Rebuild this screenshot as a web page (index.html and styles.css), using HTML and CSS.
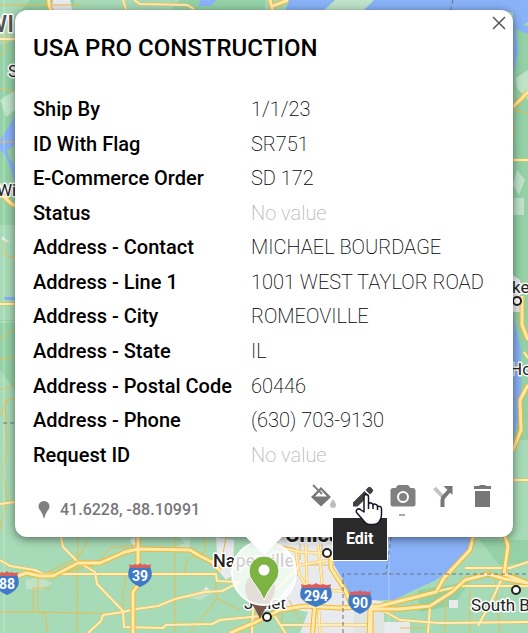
FILE: index.html
```html
<!DOCTYPE html>
<html lang="en">
<head>
  <meta charset="UTF-8" />
  <meta name="viewport" content="width=device-width, initial-scale=1" />
  <title>USA PRO CONSTRUCTION</title>
  <link rel="stylesheet" href="styles.css">
</head>
<body>

  <svg class="map" viewBox="0 0 528 633" preserveAspectRatio="xMidYMin slice" role="img" aria-label="Map">
    <defs>
      <g id="highways">
        <path d="M18 576L26 573L40 576H53L78 563H100L125 552L138 549L190 550L200 556L212 562L220 571" />
        <path d="M138 530V585L133 592V640" />
        <path d="M0 192Q8 202 15 206" />
        <path d="M49 0Q48 6 52 12M270 0L273 12M273 6L288 0" />
        <path d="M473 537L470 550L444 578L436 592L412 598L380 606L340 608L305 606L280 610L256 622L230 633" />
        <path d="M528 583L505 579L488 574L465 580L452 592L430 606L400 609H370L369 640" />
        <path d="M503 530L508 546L504 574L528 583" />
        <path d="M331 555V568L345 590L352 606M315 602L312 640" />
        <path d="M371 604V640" />
        <path d="M513 107L528 92M522 296V325L528 340M528 385L520 400L521 430L513 450" />
      </g>
      <g id="roads">
        <path d="M0 560L10 566L35 570L45 575M0 504L15 502M0 304H15" />
        <path d="M61 537L63 547L78 562L95 572L97 584L123 611L124 627L163 628L166 625L212 624L220 620L260 616" />
        <path d="M45 574H216L217 581L240 582" />
        <path d="M88 633L101 621L103 615L123 612L136 609L158 606L175 599L205 592L222 591L240 582" />
        <path d="M272 545L300 552L332 554M276 590L300 565L330 560M296 552L299 574L315 602" />
        <path d="M252 633L253 610L260 598M272 612L290 640M306 545L307 590L345 591" />
        <path d="M430 606L428 633M465 568H510L528 562M435 592L460 586H528" />
        <path d="M375 606L400 620L440 623L528 622M504 574L492 600L478 626" />
        <path d="M0 39H15M123 0L126 9M134 0L140 4L187 5L194 9M513 160H528M524 352L528 358M513 480H528" />
        <path d="M318 545L322 580L318 600L320 633M280 625H370" />
      </g>
    </defs>

    <rect width="528" height="633" fill="#a7dab6" />

    <!-- darker forest and farmland -->
    <path d="M0 45L15 40V225H0ZM0 320H15V390L0 370ZM30 0L75 0L70 12H20ZM180 0H265V12H170Z" fill="#94d1a6" />
    <path d="M505 25H528V440H505ZM480 540H528V562L500 566ZM418 590L470 582L452 606L420 612Z" fill="#94d1a6" />
    <path d="M26 580L40 577L52 583L42 590L26 589ZM174 548L184 543L180 537H190V552ZM186 597L206 588L216 591L200 600ZM0 100L15 90V110L6 117ZM517 170L525 180L519 195L513 185ZM516 78L528 70V100L517 88ZM514 198H524V215H513Z" fill="#bfe3c9" />

    <!-- towns -->
    <path d="M53 0H70Q73 8 71 12H50ZM216 537L234 540L233 575L226 580L218 570ZM130 540L135 537L136 550ZM204 590L206 586L210 591ZM275 537H334L345 595L384 602V633H300L308 612L272 605L298 575ZM384 622H410V633H384ZM449 600H458V608H449ZM513 275L520 280V312H513ZM2 236L10 243L2 240Z" fill="#e8eaed" />
    <path d="M354 608H384V633H354Z" fill="#dfe5e3" />

    <!-- water -->
    <path d="M289 0H528V22L516 30L518 50L513 78V12H285Z" fill="#89b2f8" />
    <path d="M200 0H217L210 6H199Z" fill="#89b2f8" />
    <path d="M335 0H374L362 12H322Z" fill="#bfe3c9" />
    <path d="M518 26H528V34L518 30ZM513 315L521 350V410L513 440Z" fill="#89b2f8" />
    <path d="M15 115L8 128L0 140V150L6 156L11 170L15 182V165L9 158L7 150L15 145ZM4 297H15V300H4Z" fill="#89b2f8" />
    <path d="M332 530H474L470 546L455 566L436 580L412 591L394 600L372 600L352 598L343 580L334 565Z" fill="#89b2f8" />

    <!-- county and local roads -->
    <path class="lane" d="M47 640L46 614L38 611V573M78 530L77 633M33 612V588H50M0 612H35L123 614M175 530V640M216 581V600L190 633M87 540L80 556L48 572M125 575V588H123V612M138 545L110 548L95 565L47 576M0 5H80M5 13V50L0 56M0 88L15 92M0 142H15M4 240V255L15 258M0 340Q6 332 15 330M0 360L15 356M0 390L15 385M0 415L8 400L15 398M5 398L7 450L3 470L7 500L0 530M513 110L528 113M513 123V140M270 543L296 549M281 565H330M300 537V560M322 537V552M265 537V550M450 568V574M495 575L500 633M445 600V633M400 628H430M470 590V633M205 537V552L190 558M216 598L240 610M187 559L184 574M226 537L222 560L236 573M282 612V633M289 600L300 620" />
    <path d="M389 10V633M4 0V633M0 322H15" stroke="#ffffff" stroke-opacity=".35" />

    <use href="#roads" class="road-case" />
    <use href="#roads" class="road-fill" />
    <use href="#highways" class="hwy-case" />
    <use href="#highways" class="hwy-fill" />
    <path class="border" d="M391 537L386 574M343 640V574H528M3 423H15M453 0L450 12" />

    <!-- interstate shields -->
    <g class="shield">
      <g transform="translate(7 583)">
        <path d="M-10 -9Q-13 -1 -11 3Q-8 9 0 12Q8 9 11 3Q13 -1 10 -9Z" fill="#3f7ac9" />
        <path d="M-11 -11Q-8 -9 -5 -11Q-2 -9 0 -12Q2 -9 5 -11Q8 -9 11 -11L10 -7H-10Z" fill="#d95f5f" />
        <text y="6">88</text>
      </g>
      <g transform="translate(140 575)">
        <path d="M-10 -9Q-13 -1 -11 3Q-8 9 0 12Q8 9 11 3Q13 -1 10 -9Z" fill="#3f7ac9" />
        <path d="M-11 -11Q-8 -9 -5 -11Q-2 -9 0 -12Q2 -9 5 -11Q8 -9 11 -11L10 -7H-10Z" fill="#d95f5f" />
        <text y="6">39</text>
      </g>
      <g transform="translate(316 595)">
        <path d="M-14 -9Q-17 -1 -15 3Q-10 9 0 12Q10 9 15 3Q17 -1 14 -9Z" fill="#3f7ac9" />
        <path d="M-15 -11Q-11 -9 -7 -11Q-3 -9 0 -12Q3 -9 7 -11Q11 -9 15 -11L14 -7H-14Z" fill="#d95f5f" />
        <text y="6">294</text>
      </g>
      <g transform="translate(360 602)">
        <path d="M-10 -9Q-13 -1 -11 3Q-8 9 0 12Q8 9 11 3Q13 -1 10 -9Z" fill="#3f7ac9" />
        <path d="M-11 -11Q-8 -9 -5 -11Q-2 -9 0 -12Q2 -9 5 -11Q8 -9 11 -11L10 -7H-10Z" fill="#d95f5f" />
        <text y="6">90</text>
      </g>
    </g>

    <!-- city labels -->
    <g class="city">
      <text class="state" x="-14" y="32">WI</text>
      <text x="8" y="77">S</text>
      <text x="-3" y="196">Wi</text>
      <text x="512" y="293">ke</text>
      <text x="510" y="375">Ho</text>
      <text class="big" x="285" y="542">Chicago</text>
      <text class="strong" x="213" y="567">Naperville</text>
      <text x="244" y="609">Joliet</text>
      <text x="471" y="611">South Bend</text>
    </g>
    <g fill="#ffffff" stroke="#222222" stroke-width="2">
      <circle cx="327" cy="553" r="4" />
      <circle cx="516" cy="590" r="4" />
      <circle cx="267" cy="617" r="4" />
      <circle cx="517" cy="301" r="4" />
    </g>

    <!-- markers -->
    <path d="M260 619Q256 609 248 599Q245 594 245 588A15 15 0 0 1 275 588Q275 594 272 599Q264 609 260 619Z" fill="#795548" />
    <circle cx="264" cy="573" r="32" fill="#ffffff" fill-opacity=".8" stroke="#ffffff" stroke-width="2" />
    <path d="M264 600Q260 590 253 582Q249 577 249 571A15 15 0 0 1 279 571Q279 577 275 582Q268 590 264 600Z" fill="#7cb342" stroke="#ffffff" />
    <circle cx="264" cy="570" r="5.5" fill="#ffffff" />
  </svg>

  <main class="card">
    <button type="button" class="close" aria-label="Close">
      <svg width="14" height="14" viewBox="0 0 14 14"><path d="M1 1L13 13M13 1L1 13" stroke="#555555" stroke-width="1.5" /></svg>
    </button>

    <h1>USA PRO CONSTRUCTION</h1>

    <table class="fields">
      <tr><th scope="row">Ship By</th><td>1/1/23</td></tr>
      <tr><th scope="row">ID With Flag</th><td>SR751</td></tr>
      <tr><th scope="row">E-Commerce Order</th><td>SD 172</td></tr>
      <tr><th scope="row">Status</th><td class="empty">No value</td></tr>
      <tr><th scope="row">Address - Contact</th><td>MICHAEL BOURDAGE</td></tr>
      <tr><th scope="row">Address - Line 1</th><td>1001 WEST TAYLOR ROAD</td></tr>
      <tr><th scope="row">Address - City</th><td>ROMEOVILLE</td></tr>
      <tr><th scope="row">Address - State</th><td>IL</td></tr>
      <tr><th scope="row">Address - Postal Code</th><td>60446</td></tr>
      <tr><th scope="row">Address - Phone</th><td>(630) 703-9130</td></tr>
      <tr><th scope="row">Request ID</th><td class="empty">No value</td></tr>
    </table>

    <footer class="card-footer">
      <div class="coords">
        <svg width="12" height="18" viewBox="0 0 12 18"><path d="M6 18Q5 13 2 9Q0.500 7.500 0.500 5.500A5.500 5.500 0 0 1 11.500 5.500Q11.500 7.500 10 9Q7 13 6 18Z" fill="#808080" /></svg>
        <span>41.6228, -88.10991</span>
      </div>

      <div class="actions">
        <button type="button" aria-label="Fill color">
          <svg viewBox="0 0 24 24">
            <path fill-rule="evenodd" d="M10 3L20 13L10 22.500L0 13ZM10 6L4 12.500H16Z" fill="#777777" />
            <path d="M2 1L11 10" stroke="#808080" stroke-width="2" />
            <path d="M22 15Q25 19 25 21A3 3 0 0 1 19 21Q19 19 22 15Z" fill="#bdbdbd" />
          </svg>
        </button>
        <div class="tip-anchor">
          <button type="button" aria-label="Edit" aria-describedby="tip">
            <svg viewBox="0 0 24 24">
              <path d="M2 18.500L13.500 7L18 11.500L6.500 22.500H2ZM14.500 6L17 3.500Q18.500 2 20 3.500L21.500 5Q23 6.500 21.500 8L19 10.500Z" fill="#404040" />
            </svg>
          </button>
          <div class="tip" id="tip" role="tooltip">Edit</div>
          <svg class="pointer" width="28" height="33" viewBox="0 0 28 33" aria-hidden="true">
            <path d="M9 19V4Q9 1.500 11 1.500Q13.500 1.500 13.500 4V11Q14 9.500 16 10Q18 10.500 18 12Q19 10.500 21 11.500Q22.500 12 22.500 13.500Q26.500 12.500 26.500 16V22Q26.500 26 24 29Q22 31.500 18 31.500H15Q11 31.500 8 27L2 20Q0.500 18 2 16.500Q4 15 6 17Z" fill="#ffffff" stroke="#17172b" stroke-width="1.500" stroke-linejoin="round" />
            <path d="M13.500 11V16M18 12V16M22.500 13.500V17" stroke="#17172b" stroke-width="1.500" />
          </svg>
        </div>
        <button type="button" aria-label="Photo">
          <svg viewBox="0 0 24 24">
            <path fill-rule="evenodd" d="M7 1H17L19.500 4H22Q24.500 4 24.500 6.500V20Q24.500 22.500 22 22.500H2Q-0.500 22.500 -0.500 20V6.500Q-0.500 4 2 4H4.500ZM12 7A6 6 0 0 0 12 19A6 6 0 0 0 12 7Z" fill="#808080" />
            <circle cx="12" cy="13" r="4" fill="#808080" />
            <path d="M8 31H14" stroke="#aaaaaa" stroke-width="2" />
          </svg>
        </button>
        <button type="button" aria-label="Directions">
          <svg viewBox="0 0 24 24">
            <path d="M3.500 4L12 13" stroke="#c4c4c4" stroke-width="4" />
            <path d="M11.500 23V16Q11.500 14 13.500 12L18 7" fill="none" stroke="#777777" stroke-width="4" />
            <path d="M12.500 2H21.500V11Z" fill="#777777" />
          </svg>
        </button>
        <button type="button" aria-label="Delete">
          <svg viewBox="0 0 24 24"><path d="M3 2H8L9 1H14L15 2H20V5H3ZM4 7H19V23H4Z" fill="#777777" /></svg>
        </button>
      </div>
    </footer>
  </main>

</body>
</html>
```

FILE: styles.css
```css
* {
  box-sizing: border-box;
}

body {
  position: relative;
  min-height: 100vh;
  margin: 0;
  padding: 10px 15px 96px;
  font-family: Roboto, "Liberation Sans", sans-serif;
  color: #000;
  overflow: hidden;
}

/* map */
.map {
  position: absolute;
  top: 0;
  left: 0;
  width: 100%;
  height: 100%;
}

.lane,
.border,
.road-case,
.road-fill,
.hwy-case,
.hwy-fill {
  fill: none;
  stroke-linejoin: round;
}

.lane {
  stroke: #e8bd50;
  stroke-width: 1px;
}

.border {
  stroke: #68747d;
  stroke-width: 1px;
  stroke-dasharray: 4 3;
}

.road-case {
  stroke: #f8bd3c;
  stroke-width: 3px;
}

.road-fill {
  stroke: #ffeebc;
  stroke-width: 2px;
}

.hwy-case {
  stroke: #fab527;
  stroke-width: 5px;
}

.hwy-fill {
  stroke: #ffebb0;
  stroke-width: 3px;
}

.shield {
  fill: #fff;
  font-size: 14px;
  font-weight: 700;
  text-anchor: middle;
}

.city {
  fill: #222;
  stroke: #fff;
  stroke-width: 3px;
  stroke-linejoin: round;
  paint-order: stroke;
  font-size: 17px;
}

.city .strong {
  font-size: 18px;
  font-weight: 500;
}

.city .big {
  font-size: 22px;
  font-weight: 700;
}

.city .state {
  fill: #555;
  font-size: 24px;
  font-weight: 500;
}

/* info window */
.card {
  position: relative;
  padding: 24px 18px 17px;
  background: #fff;
  border-radius: 12px;
  box-shadow: 0 2px 10px rgba(0, 0, 0, 0.5);
}

.card::after {
  content: "";
  position: absolute;
  top: 100%;
  left: 50%;
  margin-left: -18px;
  border: 18px solid transparent;
  border-top-color: #fff;
  border-bottom: 0;
}

button {
  padding: 0;
  border: 0;
  background: none;
  cursor: pointer;
}

.close {
  position: absolute;
  top: 6px;
  right: 7px;
  width: 14px;
  height: 14px;
}

svg {
  display: block;
  overflow: visible;
}

h1 {
  margin: 0 0 30px;
  font-size: 24px;
  line-height: 28px;
  font-weight: 500;
}

.fields {
  width: 100%;
  height: 380px;
  border-collapse: collapse;
  table-layout: fixed;
  font-size: 20px;
  line-height: 24px;
}

th,
td {
  padding: 0;
  text-align: left;
}

th {
  width: 218px;
  font-weight: 500;
}

td {
  font-weight: 200;
}

.empty {
  color: #b5b5b5;
}

.card-footer {
  display: flex;
  justify-content: space-between;
  height: 48px;
  padding-top: 12px;
}

.coords {
  display: flex;
  align-items: center;
  align-self: flex-end;
  gap: 10px;
  padding-left: 5px;
  font-size: 16px;
  line-height: 20px;
  font-weight: 500;
  color: #777;
}

.actions {
  display: flex;
  gap: 16px;
}

.actions button {
  display: block;
  width: 24px;
  height: 24px;
}

.tip-anchor {
  position: relative;
}

.tip {
  position: absolute;
  top: 33px;
  left: -19px;
  z-index: 1;
  padding: 9px 13px;
  border: 1px solid #fff;
  background: #2b2b2b;
  color: #fff;
  font-size: 16px;
  line-height: 24px;
  font-weight: 700;
}

.pointer {
  position: absolute;
  top: 9px;
  left: 4px;
  z-index: 2;
}
```
